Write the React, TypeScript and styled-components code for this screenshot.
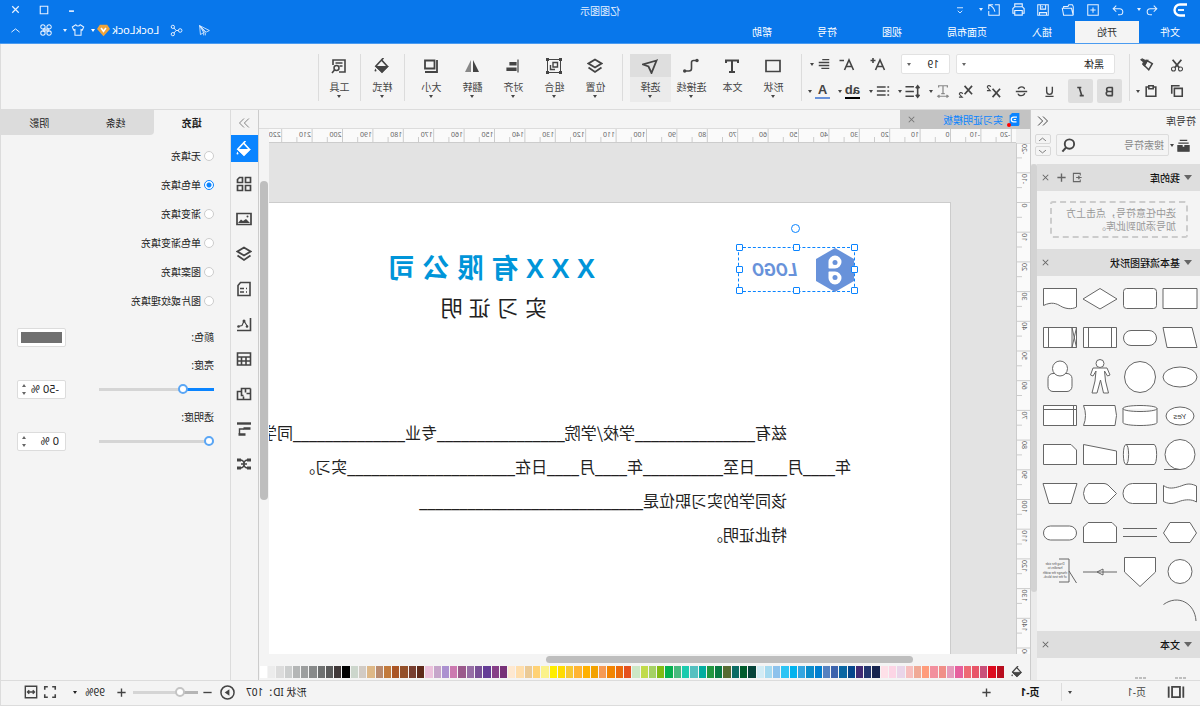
import React, { useState } from "react";
import styled, { createGlobalStyle, css } from "styled-components";

const BLUE = "#0877eb";
const ACCENT = "#0a84ff";
const PANEL = "#f4f4f4";
const LINE = "#dcdcdc";
const INK = "#444";

const GlobalStyle = createGlobalStyle`
  * { box-sizing: border-box; }
  html, body { margin: 0; height: 100%; overflow: hidden; background: ${PANEL}; }
  body { font: 10px/14px "Noto Sans", "Noto Sans CJK SC", sans-serif; color: #222; }
  button, input, select { font: inherit; color: inherit; margin: 0; padding: 0; border: 0; background: none; }
  button { display: inline-flex; align-items: center; justify-content: center; flex: none; white-space: nowrap; }
  svg { display: block; flex: none; }
`;

/* ---------- icons ---------- */

const art: Record<string, React.ReactNode> = {
  logo: <><path d="M1 2.500H8a5.500 5.500 0 0 1 0 11H3" strokeWidth="2.400" /><path d="M4 8h6" strokeWidth="1.800" /></>,
  undo: <path d="M6 3 2.500 6.500 6 10M3 6.500h7a3.500 3.500 0 0 1 0 7H8" />,
  redo: <path d="M10 3l3.500 3.500L10 10M13 6.500H6a3.500 3.500 0 0 0 0 7h2" />,
  newDoc: <path d="M2 2h12v12H2zM8 5v6M5 8h6" />,
  folder: <path d="M2 14V4l1-2h4l1 2h5v2M2 14h11l1.500-8H4L2 14" />,
  save: <path d="M2 2h12v12H2zM5 2v5h6V2M9 3.500v2M4 14v-3h8v3" />,
  print: <path d="M4 5V2h8v3M4 12H2V7l2-2h8l2 2v5h-2M4 9h8v5H4z" />,
  exportBox: <path d="M7 2H2v12h12V9M9 2h5v5M14 2c-3 1-6 3-7 8" />,
  menu: <path d="M4 5h8M5 9l3 3 3-3" />,
  minimize: <path d="M5 10h6" strokeWidth="2" />,
  maximize: <path d="M3 3h10v10H3z" strokeWidth="1.500" />,
  close: <path d="M4 4l8 8M12 4l-8 8" strokeWidth="1.500" />,
  send: <path d="M14 2 2 8l4 2zM14 2l-1 11-4-2.500zM14 2 7 11v3M9 10v4" strokeWidth="1" />,
  share: <><circle cx="3.500" cy="8" r="2.200" /><circle cx="12.500" cy="3.500" r="2" /><circle cx="12.500" cy="12.500" r="2" /><path d="M5.500 8h3l2.500-3M8.500 8l2.500 3" /></>,
  shirt: <path d="M5.500 2 1.500 4.500 3 8l1.500-.5V14h7V7.500L13 8l1.500-3.500-4-2.500c-1 2-4 2-5 0z" />,
  clover: <><circle cx="4.500" cy="4.500" r="2.500" /><circle cx="11.500" cy="4.500" r="2.500" /><circle cx="4.500" cy="11.500" r="2.500" /><circle cx="11.500" cy="11.500" r="2.500" /><path d="M4.500 7h7M4.500 9h7" /></>,
  up: <path d="M3 10l5-4 5 4" />,
  down: <path d="M3 6l5 4 5-4" />,
  diamond: <><path d="M3.500 1h9L16 6l-8 9L0 6z" fill="#f0a43a" stroke="none" /><path d="M5 5l3 4 3-4" stroke="#fff" strokeWidth="2" /></>,
  cut: <><circle cx="4" cy="12.500" r="2.300" /><circle cx="12" cy="12.500" r="2.300" /><path d="M5.500 11 13 2M10.500 11 3 2" strokeWidth="2" /></>,
  brush: <><path d="M2 6.500 8 3l3 5.500-5 5z" strokeWidth="1.800" /><path d="M7 2.500 11 9l2-2-1-2.500 3-2.500-1.500-1-3 1.500z" fill="currentColor" /></>,
  copy: <path d="M2 5h9v9H2zM5 2h9v9" strokeWidth="1.800" />,
  paste: <path d="M5.500 3.500H2.500V14h11V3.500h-3M5.500 2h5v3.500h-5z" strokeWidth="1.800" />,
  bold: <path d="M4.500 3v10M4 3h5a2.500 2.500 0 0 1 0 5H5h4.500a2.500 2.500 0 0 1 0 5H4" strokeWidth="2" />,
  italic: <path d="M7 3h5M4 13h5M9.500 3l-3 10" strokeWidth="2" />,
  underline: <path d="M4.500 2v6a3.500 3.500 0 0 0 7 0V2M3 14h10" strokeWidth="1.700" />,
  strike: <path d="M12 5c-1-3.500-8-3.500-7.500 0M4 10c1 4 8.500 4 8 .5M1 8h14" strokeWidth="1.700" />,
  sup: <><path d="M1 5l8 9M9 5l-8 9" strokeWidth="1.800" /><path d="M11 3c.5-2 4-1.500 3.500.5L11.500 7H15" strokeWidth="1.200" /></>,
  sub: <><path d="M1 2l8 9M9 2l-8 9" strokeWidth="1.800" /><path d="M11 10.500c.5-2 4-1.500 3.500.5L11.500 14H15" strokeWidth="1.200" /></>,
  letters: <path d="M3 4V2h10v2M8 2v9M6 11h4M2 14h12M4 12.500 2 14l2 1.500M12 12.500l2 1.500-2 1.500" strokeWidth="1.400" stroke="#888" />,
  lineGap: <path d="M6.500 3h9M6.500 8h9M6.500 13h9M2.500 2v12M.5 4.500l2-2.500 2 2.500M.5 11.500l2 2.500 2-2.500" strokeWidth="1.700" />,
  list: <path d="M5 3.500h10M5 8h10M5 12.500h10M1 3.500h2M1 8h2M1 12.500h2" strokeWidth="1.700" />,
  bigger: <path d="M1.500 14 6 4l4.500 10M3 10.500h6M10.500 4.500h5M13 2v5" strokeWidth="1.600" />,
  smaller: <path d="M1.500 14 6 4l4.500 10M3 10.500h6M11 4.500h4.500" strokeWidth="1.600" />,
  align: <path d="M2 3h8M2 6.300h12M2 9.600h12M2 13h9" strokeWidth="1.700" />,
  shape: <path d="M1 2.500h14v11H1z" strokeWidth="1.700" />,
  text: <path d="M2 5V2.500h12V5M8 2.500V14M5 14h6" strokeWidth="2" />,
  connector: <><path d="M2 2.500h3.500q2 0 2 2v6q0 2.500 2.500 2.500h4" strokeWidth="1.600" /><circle cx="2" cy="2.500" r="1.700" fill="currentColor" stroke="none" /><circle cx="14.300" cy="13" r="1.700" fill="currentColor" stroke="none" /></>,
  pointer: <path d="M1.500 2.500 15 6.500l-5.500 2L6.500 15z" strokeWidth="1.800" />,
  layers: <path d="M8 1.500 14.500 5.500 8 9.500 1.500 5.500zM1.500 9.500 8 14l6.500-4.500" strokeWidth="1.800" />,
  group: <><path d="M1.500 1.500h13v13h-13z" strokeWidth="1" /><path d="M4.500 4.500h4.500v4.500H4.500zM7 11.500h4.500V7" strokeWidth="1.400" /><path d="M0 0h3v3H0zM13 0h3v3h-3zM0 13h3v3H0zM13 13h3v3h-3z" fill="currentColor" stroke="none" /></>,
  alignLeft: <><path d="M3 1.500v13" strokeWidth="1.200" /><path d="M5 4.500h6v2.500H5zM5 10h9v2.500H5z" fill="currentColor" /></>,
  flip: <><path d="M7 2v12H1z" fill="currentColor" stroke="none" /><path d="M9 2v12h6z" fill="#888" stroke="none" /></>,
  size: <path d="M4.500 2.500h9.500v8H4.500zM2 2v12h12" strokeWidth="1.800" />,
  bucket: <><path d="M8.500 2 14 8 8 14 2.500 8.500zM9 2.500 6.500 0" strokeWidth="1.600" /><path d="M2.500 8.500H14L8 14z" fill="currentColor" /><path d="M14.500 10.500l1 2a1 1 0 1 1-2 0z" fill="currentColor" stroke="none" /></>,
  tools: <><path d="M14 7V2H2v12h6M4.500 5h7M4.500 8h3" strokeWidth="1.600" /><circle cx="10.500" cy="10" r="2.500" strokeWidth="1.500" /><path d="M12.500 12l2.500 3" strokeWidth="1.600" /></>,
  dblLeft: <path d="M8 2 2 8l6 6M14.500 2l-6 6 6 6" />,
  dblRight: <path d="M8 2l6 6-6 6M1.500 2l6 6-6 6" />,
  drawer: <><path d="M2 8h4.500v2h3V8H14v6H2z" fill="currentColor" /><path d="M2.500 5.500h11M4 2.500h8" strokeWidth="1.500" /></>,
  search: <><circle cx="7" cy="6.500" r="5" strokeWidth="2" /><path d="M10.500 10l4 4.500" strokeWidth="2.200" /></>,
  import: <path d="M9 2h5v12H4v-3M4 5V2h5M2 8h8M7 5.500 4.500 8 7 10.500" strokeWidth="1.500" />,
  plus: <path d="M8 2v12M2 8h12" strokeWidth="2" />,
  minus: <path d="M2 8h12" strokeWidth="2" />,
  apps: <path d="M1.500 1.500h5v5h-5zM1.500 9.500h5v5h-5zM9.500 9.500h5v5h-5zM9.500 1.500h3l2 2v3h-5z" strokeWidth="1.700" />,
  image: <><path d="M1 2.500h14v11H1z" strokeWidth="1.700" /><path d="M2 12l4-4 3 2 2-1.500 3 3.500z" fill="currentColor" stroke="none" /><circle cx="4.500" cy="5.500" r="1" fill="currentColor" stroke="none" /></>,
  note: <path d="M2 1.500h9.500L14 4.500v10H2zM5 7.500h1M8 7.500h4M5 11h1M8 11h4" strokeWidth="1.600" />,
  chart: <><path d="M1.500 2v12.500H15" strokeWidth="1.600" /><path d="M4.500 10.500 8 5l2 4.500 4 1" strokeWidth="1.100" /><circle cx="8" cy="5" r="1.500" fill="currentColor" stroke="none" /><circle cx="5" cy="10.500" r="1.300" fill="currentColor" stroke="none" /><circle cx="13.500" cy="10.500" r="1.300" fill="currentColor" stroke="none" /></>,
  table: <path d="M1.500 2h13v12h-13zM1.500 6h13M1.500 10h13M6 6v8M10.500 6v8" strokeWidth="1.600" />,
  plan: <path d="M1.500 2.500h9v3h4v8h-6v-3M8.500 13.500h-7v-11M1.500 7.500h4M6.500 2.500v4M10.500 5.500v4h-2" strokeWidth="1.600" />,
  gantt: <><path d="M1 2.500h14" strokeWidth="2.400" /><path d="M1.500 7.500h7M6.500 13.500h7" strokeWidth="2.400" /><path d="M8 8h4.500v5" strokeWidth="1.400" /></>,
  mind: <><path d="M4 4q4 0 4 4t4 4M4 12q4 0 4-4t4-4M5 8h6" strokeWidth="1.400" /><path d="M1 2.500h4v3H1zM11 2.500h4v3h-4zM1 10.500h4v3H1zM11 10.500h4v3h-4z" fill="currentColor" stroke="none" /></>,
  pages: <path d="M4.500 3.500h7v9h-7zM1.500 3v10M14.500 3v10" strokeWidth="1.600" />,
  play: <><circle cx="8" cy="8" r="7" strokeWidth="1.600" /><path d="M6 4.500 11 8l-5 3.500z" fill="currentColor" stroke="none" /></>,
  full: <path d="M2 5.500V2h3.500M10.500 2H14v3.500M14 10.500V14h-3.500M5.500 14H2v-3.500" strokeWidth="1.800" />,
  fit: <path d="M1.500 1.500h13v13h-13zM4 8h8M6 6 4 8l2 2M10 6l2 2-2 2" strokeWidth="1.600" />,
  doc: <><path d="M2 0h9l3 3v11a2 2 0 0 1-2 2H4a2 2 0 0 1-2-2z" fill={ACCENT} stroke="none" /><path d="M5 5h4a3 3 0 0 1 0 6H5.500M6 8h3" stroke="#fff" strokeWidth="1.500" /></>,
};

const Icon = ({ name, size = 14 }: { name: string; size?: number }) => (
  <svg width={size} height={size} viewBox="0 0 16 16" fill="none" stroke="currentColor" strokeWidth="1.2" aria-hidden="true">
    {art[name]}
  </svg>
);

const Caret = styled.i<{ $up?: boolean; $large?: boolean }>`
  width: 0;
  flex: none;
  border: ${(p) => (p.$large ? "4px" : "2px")} solid transparent;
  border-bottom: ${(p) => (p.$up ? "3px solid currentColor" : "0")};
  border-top: ${(p) => (p.$up ? "0" : `${p.$large ? "5px" : "3px"} solid currentColor`)};
`;

/* ---------- frame ---------- */

/* The whole window is shown as its mirror image. */
const Shell = styled.div`
  height: 100vh;
  display: flex;
  flex-direction: column;
  background: ${PANEL};
  border-right: 1px solid ${LINE};
  transform: scaleX(-1);
`;

const Header = styled.header`
  flex: none;
  background: ${BLUE};
  color: #e6f1ff;
  border-bottom: 1px solid #4a9bf0;
  margin-right: -1px;
`;

const TitleRow = styled.div`
  display: flex;
  height: 21px;
  align-items: center;
`;

const Side = styled.div<{ $end?: boolean }>`
  flex: 1;
  display: flex;
  align-items: center;
  padding: 0 2px;
  margin-top: -2px;
  justify-content: ${(p) => (p.$end ? "flex-end" : "flex-start")};
`;

const BarButton = styled.button<{ $w?: number }>`
  width: ${(p) => p.$w ?? 25}px;
  height: 20px;
`;

const BarSplit = styled.button`
  gap: 4px;
  height: 20px;
  width: 33px;
  padding: 0 2px 0 0;
`;

const LogoMark = styled.span`
  width: 24px;
  margin-left: 10px;
  color: #fff;
`;

const AppTitle = styled.h1`
  margin: 0;
  font-size: 10px;
  font-weight: 400;
`;

const TabRow = styled.div`
  display: flex;
  height: 22px;
`;

const Tabs = styled.nav`
  display: flex;
  gap: 1px;
  flex: 1;
`;

const MenuTab = styled.button<{ $active?: boolean; $pad?: number }>`
  padding: 0 ${(p) => p.$pad ?? 22}px;
  color: ${(p) => (p.$active ? "#333" : "#fff")};
  background: ${(p) => (p.$active ? PANEL : "transparent")};
`;

const Account = styled.div`
  display: flex;
  align-items: center;
  margin-top: -4px;
`;

const UserButton = styled.button`
  gap: 2px;
  padding: 0 3px;
  font-size: 11px;
  color: #fff;
`;

const ThemeButton = styled.button`
  gap: 4px;
  width: 28px;
`;

/* ---------- ribbon ---------- */

const Ribbon = styled.div`
  flex: none;
  display: flex;
  height: 66px;
  padding-top: 10px;
  border-bottom: 1px solid ${LINE};
  color: ${INK};
`;

const RibbonGroup = styled.div<{ $pad?: string }>`
  display: flex;
  height: 47px;
  padding: ${(p) => p.$pad ?? "0"};
  border-right: 1px solid ${LINE};
`;

const ClipGrid = styled.div`
  display: grid;
  grid-template-columns: 26px 34px;
  grid-template-rows: 20px 32px;
  align-items: center;
  padding-top: 1px;
`;

const ClipButton = styled.button`
  gap: 4px;
  height: 20px;
`;

const FontRows = styled.div`
  display: flex;
  flex-direction: column;
  gap: 5px;
`;

const FontRow = styled.div<{ $indent?: boolean }>`
  display: flex;
  align-items: center;
  height: ${(p) => (p.$indent ? "20px" : "24px")};
  padding-left: ${(p) => (p.$indent ? "7px" : "0")};
`;

const Picker = styled.label<{ $w: number }>`
  position: relative;
  width: ${(p) => p.$w}px;
  height: 20px;
  margin-right: 6px;
  border: 1px solid #e2e2e2;
  border-radius: 2px;
  background: #fff;
  color: #222;

  select {
    appearance: none;
    display: block;
    width: 100%;
    height: 18px;
    padding-left: 10px;
  }

  i {
    position: absolute;
    right: 5px;
    top: 8px;
    color: #666;
  }
`;

const IconButton = styled.button<{ $w?: number; $on?: boolean }>`
  width: ${(p) => p.$w ?? 28}px;
  height: 24px;
  border-radius: 2px;
  ${(p) => p.$on && css`background: #dedede; margin-right: 4px;`}
`;

const SplitButton = styled.button`
  width: 30px;
  height: 24px;
  gap: 3px;
  justify-content: flex-start;
  padding-left: 2px;
`;

const Swatched = styled.span<{ $c: string }>`
  width: 15px;
  height: 16px;
  font: 700 13px/13px "Liberation Sans", Arial, sans-serif;
  text-align: center;
  border-bottom: 2px solid ${(p) => p.$c};
`;

const Tool = styled.button<{ $on?: boolean }>`
  flex-direction: column;
  justify-content: flex-start;
  width: 41px;
  height: 48px;
  background: ${(p) => (p.$on ? "linear-gradient(#dedede 23px, #ebebeb 23px)" : "none")};

  svg { margin: 4px 0 6px; }
  i { margin-top: 1px; }
`;

/* ---------- library ---------- */

const Main = styled.main`
  flex: 1;
  min-height: 0;
  display: flex;
`;

const Library = styled.aside`
  width: 170px;
  flex: none;
  display: flex;
  flex-direction: column;
  border-right: 1px solid #ccc;
`;

const LibHead = styled.div`
  display: flex;
  justify-content: space-between;
  align-items: center;
  height: 22px;
  padding: 0 6px 0 4px;
  color: #333;
`;

const LibSearch = styled.div`
  display: flex;
  align-items: center;
  height: 32px;
  padding: 0 4px 6px 8px;
  color: ${INK};
`;

const LibMenu = styled.button`
  width: 23px;
  gap: 2px;
`;

const SearchBox = styled.label`
  flex: 1;
  min-width: 0;
  display: flex;
  align-items: center;
  height: 22px;
  padding: 0 4px;
  margin-right: 5px;
  border: 1px solid ${LINE};
  border-radius: 2px;

  input { flex: 1; width: 0; min-width: 0; outline: 0; }
  input::placeholder { color: #888; opacity: 1; }
`;

const StepPair = styled.div`
  flex: none;
  display: flex;
  flex-direction: column;
  gap: 2px;

  button {
    width: 16px;
    height: 10px;
    border: 1px solid #d8d8d8;
    border-radius: 2px;
    color: #666;
  }
`;

const LibBody = styled.div`
  flex: 1;
  min-height: 0;
  display: flex;
`;

const LibList = styled.div`
  flex: 1;
  overflow: hidden;
`;

const LibTrack = styled.div`
  width: 6px;
  background: #ebebeb;
`;

const LibThumb = styled.div`
  height: 83%;
  border-radius: 3px;
  background: #d3d3d3;
`;

const SectionHead = styled.div`
  display: flex;
  align-items: center;
  height: 27px;
  padding: 0 1px 0 8px;
  background: #dedede;
  color: #666;

  h2 { margin: 0 auto 0 4px; font-size: 10px; font-weight: 500; color: #111; }
  button { width: 16px; height: 16px; }
`;

const DropHint = styled.p`
  margin: 10px 13px 11px 12px;
  padding: 4px 10px;
  height: 37px;
  border: 2px dashed #ccc;
  border-radius: 3px;
  color: #999;
  line-height: 13px;
  white-space: nowrap;
`;

const ShapeGrid = styled.div`
  display: grid;
  grid-template-columns: repeat(4, 40px);
  grid-auto-rows: 39px;
  padding: 3px 0 1px;
`;

const TinyText = styled.text`
  font: 3px "Noto Sans", sans-serif;
  fill: #444;
  stroke: none;
  text-anchor: middle;
`;

const YesText = styled.text`
  font: italic 8px "Liberation Sans", Arial, sans-serif;
  fill: #444;
  stroke: none;
`;

const shapes: [string, React.ReactNode][] = [
  ["流程", <path d="M3 9.500h34v20H3z" />],
  ["圆角矩形", <rect x="3.500" y="9.500" width="33" height="20" rx="3" />],
  ["判定", <path d="M20 9.500 37 20 20 30 3 20z" />],
  ["文档", <path d="M3.500 9.500h33v17c-8-4-13-2-17 0.500s-11 4-16 1z" />],
  ["数据", <path d="M8 9.500h29l-4 20H3z" />],
  ["终止", <rect x="3.500" y="12.500" width="33" height="15" rx="7.500" />],
  ["子流程", <path d="M3.500 9.500h33v20h-33zM8.500 9.500v20M31.500 9.500v20" />],
  ["批处理", <path d="M3.500 9.500h33v20h-33zM8 9.500v20M31.500 9.500v20M3.500 9.500l4.500 20M8 9.500l-4.500 20" />],
  ["椭圆", <ellipse cx="20" cy="20" rx="17" ry="10" />],
  ["圆形", <circle cx="20" cy="20" r="15.500" />],
  ["人", <><path d="M13 11h14l2.500 7-2.500 1-3-5 1 10 3 12h-5l-3.500-13L16.500 36h-5l3-12 1-10-3 5-2.500-1z" /><circle cx="20" cy="6.500" r="4" /></>],
  ["用户", <><rect x="8" y="16.500" width="24" height="18" rx="5" /><circle cx="20" cy="11.500" r="7.500" /></>],
  ["是", <><ellipse cx="20" cy="20" rx="14" ry="9" /><YesText x="20" y="23" textAnchor="middle">Yes</YesText></>],
  ["数据库", <path d="M3 12.500v14c0 4 34 4 34 0v-14c0 4-34 4-34 0s34-4 34 0" />],
  ["存储数据", <path d="M5 9.500h31.500q-4 10 0 20H5q-3-10 0-20z" />],
  ["内部存储", <path d="M3.500 9.500h33v20h-33zM3.500 13.500h33M6.500 9.500v20" />],
  ["顺序数据", <><circle cx="20" cy="19.500" r="15" /><path d="M20 34.500h16" /></>],
  ["直接数据", <path d="M6 9.500h28c3.500 0 3.500 20 0 20H6c-3.500 0-3.500-20 0-20zM34 9.500c-3.500 0-3.500 20 0 20" />],
  ["手动输入", <path d="M3.500 16 36.500 9.500v20h-33z" />],
  ["卡片", <path d="M9 9.500h27.500v20h-33V15z" />],
  ["纸带", <path d="M3.500 12c8-4 12-1 17 0.500s11 3 16-1v16c-8 4-12 1-17-.5s-11-2-16 1z" />],
  ["延迟", <path d="M3.500 9.500h24a9.500 10 0 0 1 0 20h-24z" />],
  ["显示", <path d="M3.500 19.500 12 11q2-1.500 4-1.500h15.500q5 4 5 10t-5 10H16q-2 0-4-1.500z" />],
  ["手动操作", <path d="M3 9.500h34l-6 20H9z" />],
  ["准备", <path d="M3.500 20 10 9.500h20L36.500 20 30 29.500H10z" />],
  ["并行", <path d="M3 15.500h34M3 23.500h34" />],
  ["循环界限", <path d="M8 9.500h24l4.500 4.500v15.500h-33V14z" />],
  ["终止符", <rect x="3.500" y="13" width="33" height="14" rx="7" />],
  ["连接点", <circle cx="20" cy="19.500" r="12" />],
  ["跨页引用", <path d="M4.500 5.500h31V20L20 34.500 4.500 20z" />],
  ["箭头", <path d="M3 20h34M17 17l6 3-6 3z" />],
  ["注释", <><path d="M21 7h-10v23h10M11 19 3.500 31" fill="none" /><TinyText x="25" y="13">Drag the side</TinyText><TinyText x="25" y="17">handles to</TinyText><TinyText x="25" y="22">change the width</TinyText><TinyText x="25" y="26">of the text block.</TinyText></>],
  ["弧线", <path d="M36.500 13.500C22 3 5 12 4 30" fill="none" />],
];

/* ---------- workspace ---------- */

const Workspace = styled.section`
  flex: 1;
  min-width: 0;
  display: grid;
  grid-template-columns: 14px 1fr 10px;
  grid-template-rows: 19px 14px 1fr 11px 15px;
  border-right: 1px solid #ccc;
`;

const DocTabs = styled.div`
  grid-column: 1 / -1;
  display: flex;
  border-bottom: 1px solid ${LINE};
`;

const DocTab = styled.div`
  display: flex;
  align-items: center;
  width: 130px;
  height: 19px;
  padding: 0 6px 0 9px;
  background: #c3c3c3;
  color: ${ACCENT};

  a { color: inherit; text-decoration: none; margin: 0 auto 0 5px; }
  button { color: #777; width: 12px; }
`;

const DocIcon = styled.span`
  position: relative;

  &::after {
    content: "";
    position: absolute;
    right: -1px;
    bottom: -1px;
    width: 4px;
    height: 4px;
    border-radius: 50%;
    background: #f00;
  }
`;

const Corner = styled.div`
  background: #efefef;
`;

const RulerBox = styled.div`
  overflow: hidden;
  background: #fafafa;
  min-height: 0;

  line { stroke: #ccc; }
  text { font: 7px "Noto Sans", sans-serif; fill: #666; }
`;

const VScroll = styled.div`
  grid-row: 2 / 5;
  grid-column: 3;
  padding: 52px 1px 0 1px;
`;

const VThumb = styled.div`
  height: 66%;
  border-radius: 4px;
  background: #bebebe;
`;

const HScroll = styled.div`
  grid-column: 1 / 3;
  padding: 2px 0 1px 117px;
`;

const HThumb = styled.div`
  width: 57%;
  height: 7px;
  border-radius: 4px;
  background: #bebebe;
`;

const Canvas = styled.div`
  position: relative;
  overflow: hidden;
  background: #e3e3e3;
`;

const Page = styled.article`
  position: absolute;
  left: 65px;
  top: 59px;
  right: -80px;
  bottom: -80px;
  border: 1px solid #ccc;
  background: #fff;
  color: #222;
  white-space: nowrap;
`;

const Company = styled.h2`
  position: absolute;
  left: 355px;
  top: 47px;
  margin: 0;
  font: 700 27px/38px "Liberation Sans", "Noto Sans CJK SC", sans-serif;
  color: #0095d9;
`;

const DocTitle = styled.h3`
  position: absolute;
  left: 403px;
  top: 91px;
  margin: 0;
  font: 400 22px/30px "Liberation Sans", "Noto Sans CJK SC", sans-serif;
`;

const Letter = styled.div`
  position: absolute;
  left: 99px;
  top: 212px;
  font: 16px/34px "Noto Sans CJK SC", sans-serif;

  p { margin: 0; height: 34px; }
`;

const Indented = styled.p`
  padding-left: 64px;
`;

const Blank = styled.span`
  font: 18px/20px "Noto Sans", sans-serif;
`;

const Selection = styled.div`
  position: absolute;
  left: 95px;
  top: 44px;
  display: flex;
  align-items: center;
  gap: 17px;
  width: 117px;
  height: 45px;
  border: 1px dashed ${ACCENT};

  b {
    font: italic 700 18px/24px Roboto, sans-serif;
    color: #6892da;
  }
`;

const Handle = styled.i<{ $x: string; $y: string; $round?: boolean }>`
  position: absolute;
  left: ${(p) => p.$x};
  top: ${(p) => p.$y};
  width: ${(p) => (p.$round ? 9 : 7)}px;
  height: ${(p) => (p.$round ? 9 : 7)}px;
  margin: -4px 0 0 -4px;
  border: 1px solid ${ACCENT};
  border-radius: ${(p) => (p.$round ? "50%" : "1px")};
  background: #fff;
`;

const Palette = styled.div`
  grid-column: 1 / -1;
  display: flex;
  align-items: center;
  height: 14px;
  padding-left: 5px;
  color: ${INK};
`;

const PaletteMenu = styled.button`
  width: 21px;
  justify-content: flex-start;
  padding-left: 2px;
`;

const Chip = styled.button<{ $c: string }>`
  flex: 1 1 0;
  min-width: 0;
  height: 12px;
  background: ${(p) => p.$c};
  border-right: 1px solid ${PANEL};
`;

const palette =
  "b80d1e dd0a1e c9507a e85568 ee6a74 e6609e e59bbb f08f88 f2909e ff9c7c f0aa96 f7bfbe ead5e9 fcd5e5 fee0e8 16244f 23366f 412b74 06468c 0a66a3 3d63ac 5581c0 007fd0 0b8ccb 34a5e0 02b3ee 2cc4f4 8dc2ec a5daf0 d2ecf5 05443a 005c2c 0a6b64 566b32 087a43 229640 03ada0 54c0c0 1bcbae 48ba7e 06b050 82bb14 a5d164 c1db4a cce7c6 e5511e ea6a0c f28400 f59a55 f3a200 ffb000 ffb432 f7c832 ffdb00 ffee00 fbf28a ffd275 ebca95 ffdeac fee8d0 783278 873f87 643c96 785096 966ea5 9b5a8c cc7ab0 ab91d0 c6a5ca ecc2dc 5f2a1a 783f30 94502a aa5525 c27a3c b98a6e deb887 d2cbc4 ccd6cc 000000 403838 5a5a5a 6e7070 888a8a 9c9e9e b4b6b6 cccece dcdcdc ececec ffffff".split(" ");

const range = (from: number, to: number) => Array.from({ length: to - from + 1 }, (_, i) => from + i);

/* Last labelled tick that fits beside the side panels and above the bottom bars. */
const lastColumn = () => Math.floor((window.innerWidth - 519) / 30.4);
const lastRow = () => Math.floor((window.innerHeight - 253) / 29.7);

const HRuler = () => (
  <RulerBox>
    <svg width="100%" height="14">
      {range(-2, lastColumn()).map((n) => {
        const x = 65.5 + n * 30.4;
        return (
          <g key={n}>
            <line x1={x} x2={x} y1="0" y2="14" />
            <line x1={x + 15.2} x2={x + 15.2} y1="8" y2="14" />
            <text x={x + 1} y="8">{n * 10}</text>
          </g>
        );
      })}
      <line x1="0" x2="100%" y1="13.5" y2="13.5" />
    </svg>
  </RulerBox>
);

const VRuler = () => (
  <RulerBox>
    <svg width="14" height="100%">
      {range(-2, lastRow()).map((n) => {
        const y = 59.5 + n * 29.7;
        return (
          <g key={n}>
            <line x1="0" x2="14" y1={y} y2={y} />
            <line x1="8" x2="14" y1={y + 14.8} y2={y + 14.8} />
            <text transform={`translate(8 ${y + 1}) rotate(-90)`} textAnchor="end">{n * 10}</text>
          </g>
        );
      })}
      <line x1="13.5" x2="13.5" y1="0" y2="100%" />
    </svg>
  </RulerBox>
);

/* ---------- properties ---------- */

const Rail = styled.nav`
  width: 28px;
  flex: none;
  display: flex;
  flex-direction: column;
  gap: 8px;
  border-right: 1px solid ${LINE};
  color: ${INK};
`;

const RailToggle = styled.button`
  height: 25px;
  margin-bottom: -8px;
  color: #777;
`;

const RailButton = styled.button<{ $on?: boolean }>`
  height: 27px;
  background: ${(p) => (p.$on ? ACCENT : "none")};
  color: ${(p) => (p.$on ? "#fff" : "inherit")};
`;

const Props = styled.aside`
  width: 229px;
  flex: none;
`;

const PropTabs = styled.div`
  display: flex;
  height: 25px;
`;

const PropTab = styled.button<{ $on?: boolean; $first?: boolean }>`
  flex: 1;
  font-weight: ${(p) => (p.$on ? 700 : 400)};
  background: ${(p) => (p.$on ? PANEL : "#dcdcdc")};
  border-bottom-left-radius: ${(p) => (p.$first ? "4px" : "0")};
`;

const PropBody = styled.div`
  display: flex;
  flex-direction: column;
  padding: 6px 16px 0;
`;

const RadioRow = styled.label`
  display: flex;
  align-items: center;
  gap: 3px;
  height: 29px;

  input {
    appearance: none;
    width: 10px;
    height: 10px;
    border: 1px solid #ccc;
    border-radius: 50%;
    background: #fff;
  }
  input:checked {
    border-color: ${ACCENT};
    background: radial-gradient(${ACCENT} 2px, #fff 3px);
  }
`;

const Field = styled.div<{ $gap: number }>`
  display: flex;
  align-items: center;
  justify-content: space-between;
  height: 20px;
  margin-top: ${(p) => p.$gap}px;
`;

const ColorInput = styled.input`
  width: 49px;
  height: 19px;
  padding: 3px;
  border: 1px solid ${LINE};
  border-radius: 2px;
  background: #fff;

  &::-webkit-color-swatch-wrapper { padding: 0; }
  &::-webkit-color-swatch { border: 0; }
`;

const Slider = styled.input.attrs({ type: "range" })<{ $w: number; $fill: string; $ring: string }>`
  appearance: none;
  width: ${(p) => p.$w}px;
  height: 10px;
  background: linear-gradient(
      to right,
      ${(p) => p.$fill} ${(p) => Number(p.value)}%,
      #d5d5d5 ${(p) => Number(p.value)}%
    )
    center / 100% 3px no-repeat;

  &::-webkit-slider-thumb {
    appearance: none;
    width: 10px;
    height: 10px;
    border: 2px solid ${(p) => p.$ring};
    border-radius: 50%;
    background: #fff;
  }
`;

const Spin = styled.div`
  display: flex;
  width: 49px;
  height: 19px;
  border: 1px solid ${LINE};
  border-radius: 2px;
  background: #fff;
  color: #666;

  input { flex: 1; min-width: 0; padding-left: 6px; font-size: 11px; color: #222; }
`;

const SpinArrows = styled.div`
  display: flex;
  flex-direction: column;
  justify-content: center;
  gap: 2px;
  width: 12px;

  button { height: 6px; }
`;

const Percent = ({ value, label }: { value: string; label: string }) => (
  <Spin>
    <input aria-label={label} defaultValue={value} />
    <SpinArrows>
      <button aria-label="增加"><Caret $up /></button>
      <button aria-label="减少"><Caret /></button>
    </SpinArrows>
  </Spin>
);

/* ---------- status bar ---------- */

const Status = styled.footer`
  flex: none;
  display: flex;
  align-items: center;
  height: 26px;
  padding-bottom: 2px;
  border-top: 1px solid ${LINE};
  border-bottom: 1px solid ${LINE};
  color: ${INK};
`;

const PagePicker = styled.label`
  position: relative;
  width: 92px;
  margin-left: 14px;
  border-right: 1px solid ${LINE};

  select {
    appearance: none;
    display: block;
    width: 100%;
    height: 18px;
    padding-left: 7px;
  }

  i { position: absolute; right: 6px; top: 8px; }
`;

const PageTab = styled.button`
  width: 62px;
  color: #111;
  font-weight: 700;
`;

const StatusButton = styled.button<{ $w: number }>`
  width: ${(p) => p.$w}px;
  height: 20px;
`;

const StatusText = styled.span`
  margin-left: auto;
  margin-right: 8px;
  color: #222;
`;

const ZoomButton = styled.button`
  gap: 8px;
  width: 52px;
  padding-left: 6px;
  justify-content: flex-start;
  color: #222;
`;

const ViewButtons = styled.div`
  display: flex;
  margin-right: 20px;
`;

const PagesMark = styled.button`
  width: 18px;
  margin-left: 15px;
`;

const fills = ["无填充", "单色填充", "渐变填充", "单色渐变填充", "图案填充", "图片或纹理填充"];
const railItems = ["apps", "image", "layers", "note", "chart", "table", "plan", "gantt", "mind"];
const railNames = ["符号", "图片", "图层", "注释", "图表", "表格", "平面图", "甘特图", "导图"];

const Section = ({ title, extra }: { title: string; extra?: boolean }) => (
  <SectionHead>
    <Caret $large />
    <h2>{title}</h2>
    {extra && <button aria-label="导入"><Icon name="import" size={11} /></button>}
    {extra && <button aria-label="添加"><Icon name="plus" size={11} /></button>}
    <button aria-label="关闭"><Icon name="close" size={11} /></button>
  </SectionHead>
);

const ToolItem = ({ icon, label, on, plain }: { icon: string; label: string; on?: boolean; plain?: boolean }) => (
  <Tool $on={on}>
    <Icon name={icon} size={16} />
    {label}
    {!plain && <Caret />}
  </Tool>
);

const blank = (n: number) => <Blank>{"_".repeat(n)}</Blank>;

export default function App() {
  const [fill, setFill] = useState(1);
  const [light, setLight] = useState(25);
  const [alpha, setAlpha] = useState(0);
  const [zoom, setZoom] = useState(24);

  return (
    <>
      <GlobalStyle />
      <Shell>
        <Header>
          <TitleRow>
            <Side>
              <LogoMark><Icon name="logo" size={16} /></LogoMark>
              <BarSplit aria-label="撤销"><Icon name="undo" size={14} /><Caret /></BarSplit>
              <BarButton aria-label="恢复"><Icon name="redo" size={14} /></BarButton>
              <BarButton aria-label="新建"><Icon name="newDoc" size={14} /></BarButton>
              <BarButton aria-label="打开"><Icon name="folder" size={14} /></BarButton>
              <BarButton aria-label="保存"><Icon name="save" size={14} /></BarButton>
              <BarButton aria-label="打印"><Icon name="print" size={15} /></BarButton>
              <BarSplit aria-label="导出"><Icon name="exportBox" size={14} /><Caret /></BarSplit>
              <BarButton aria-label="更多"><Icon name="menu" size={12} /></BarButton>
            </Side>
            <AppTitle>亿图图示</AppTitle>
            <Side $end>
              <BarButton $w={28} aria-label="最小化"><Icon name="minimize" size={13} /></BarButton>
              <BarButton $w={28} aria-label="最大化"><Icon name="maximize" size={12} /></BarButton>
              <BarButton $w={28} aria-label="关闭窗口"><Icon name="close" size={13} /></BarButton>
            </Side>
          </TitleRow>
          <TabRow>
            <Tabs>
              <MenuTab $pad={20}>文件</MenuTab>
              <MenuTab $active>开始</MenuTab>
              <MenuTab>插入</MenuTab>
              <MenuTab>页面布局</MenuTab>
              <MenuTab>视图</MenuTab>
              <MenuTab>符号</MenuTab>
              <MenuTab>帮助</MenuTab>
            </Tabs>
            <Account>
              <BarButton $w={28} aria-label="发送"><Icon name="send" size={13} /></BarButton>
              <BarButton $w={28} aria-label="分享"><Icon name="share" size={13} /></BarButton>
              <UserButton>LockLock<Icon name="diamond" size={13} /><Caret /></UserButton>
              <ThemeButton aria-label="主题"><Icon name="shirt" size={14} /><Caret /></ThemeButton>
              <BarButton $w={28} aria-label="应用"><Icon name="clover" size={14} /></BarButton>
              <BarButton $w={32} aria-label="收起"><Icon name="up" size={13} /></BarButton>
            </Account>
          </TabRow>
        </Header>

        <Ribbon>
          <RibbonGroup $pad="0 0 0 10px">
            <ClipGrid>
              <ClipButton aria-label="剪切"><Icon name="cut" /></ClipButton>
              <ClipButton aria-label="格式刷"><Icon name="brush" /></ClipButton>
              <ClipButton aria-label="复制"><Icon name="copy" /></ClipButton>
              <ClipButton aria-label="粘贴"><Icon name="paste" /><Caret /></ClipButton>
            </ClipGrid>
          </RibbonGroup>
          <RibbonGroup $pad="0 0 0 7px">
            <FontRows>
              <FontRow $indent>
                <Picker $w={159}><select aria-label="字体"><option>黑体</option></select><Caret /></Picker>
                <Picker $w={49}><select aria-label="字号"><option>19</option></select><Caret /></Picker>
                <IconButton $w={34} aria-label="增大字号"><Icon name="bigger" size={16} /></IconButton>
                <IconButton aria-label="减小字号"><Icon name="smaller" size={16} /></IconButton>
                <SplitButton aria-label="对齐方式"><Icon name="align" /><Caret /></SplitButton>
              </FontRow>
              <FontRow>
                <IconButton $w={25} $on aria-label="加粗"><Icon name="bold" size={13} /></IconButton>
                <IconButton $w={25} $on aria-label="斜体"><Icon name="italic" size={13} /></IconButton>
                <IconButton aria-label="下划线"><Icon name="underline" size={13} /></IconButton>
                <IconButton aria-label="删除线"><Icon name="strike" size={13} /></IconButton>
                <IconButton aria-label="上标"><Icon name="sup" size={15} /></IconButton>
                <IconButton aria-label="下标"><Icon name="sub" size={15} /></IconButton>
                <SplitButton aria-label="字符间距"><Icon name="letters" /><Caret /></SplitButton>
                <SplitButton aria-label="行距"><Icon name="lineGap" size={15} /><Caret /></SplitButton>
                <SplitButton aria-label="项目符号"><Icon name="list" /><Caret /></SplitButton>
                <SplitButton><Swatched $c="#000">ab</Swatched><Caret /></SplitButton>
                <SplitButton><Swatched $c="#6892da">A</Swatched><Caret /></SplitButton>
              </FontRow>
            </FontRows>
          </RibbonGroup>
          <RibbonGroup $pad="0 7px">
            <ToolItem icon="shape" label="形状" />
            <ToolItem icon="text" label="文本" plain />
            <ToolItem icon="connector" label="连接线" />
            <ToolItem icon="pointer" label="选择" on />
          </RibbonGroup>
          <RibbonGroup $pad="0 6px">
            <ToolItem icon="layers" label="位置" />
            <ToolItem icon="group" label="组合" />
            <ToolItem icon="alignLeft" label="对齐" />
            <ToolItem icon="flip" label="翻转" />
            <ToolItem icon="size" label="大小" />
          </RibbonGroup>
          <RibbonGroup $pad="0 1px"><ToolItem icon="bucket" label="样式" /></RibbonGroup>
          <RibbonGroup><ToolItem icon="tools" label="工具" /></RibbonGroup>
        </Ribbon>

        <Main>
          <Library>
            <LibHead>
              符号库
              <button aria-label="收起符号库"><Icon name="dblLeft" size={12} /></button>
            </LibHead>
            <LibSearch>
              <LibMenu aria-label="符号库菜单"><Icon name="drawer" size={15} /><Caret /></LibMenu>
              <SearchBox>
                <input placeholder="搜索符号" aria-label="搜索符号" />
                <Icon name="search" size={15} />
              </SearchBox>
              <StepPair>
                <button aria-label="上一个"><Icon name="up" size={11} /></button>
                <button aria-label="下一个"><Icon name="down" size={11} /></button>
              </StepPair>
            </LibSearch>
            <LibBody>
              <LibList>
                <Section title="我的库" extra />
                <DropHint>选中任意符号，点击上方<br />加号添加到此库。</DropHint>
                <Section title="基本流程图形状" />
                <ShapeGrid>
                  {shapes.map(([name, body]) => (
                    <svg key={name} width="40" height="39" viewBox="0 0 40 39" fill="#fff" stroke="#666" strokeWidth="1" role="img" aria-label={name}>
                      {body}
                    </svg>
                  ))}
                </ShapeGrid>
                <Section title="文本" />
                <ShapeGrid>
                  {[0, 1].map((k) => (
                    <svg key={k} width="40" height="39" viewBox="0 0 40 39" stroke="#888" strokeDasharray="3 1">
                      <path d="M14 17h12" />
                    </svg>
                  ))}
                </ShapeGrid>
              </LibList>
              <LibTrack><LibThumb /></LibTrack>
            </LibBody>
          </Library>

          <Workspace>
            <DocTabs>
              <DocTab>
                <DocIcon><Icon name="doc" size={13} /></DocIcon>
                <a href="#doc">实习证明模板</a>
                <button aria-label="关闭文档"><Icon name="close" size={11} /></button>
              </DocTab>
            </DocTabs>
            <Corner />
            <HRuler />
            <VScroll><VThumb /></VScroll>
            <VRuler />
            <Canvas>
              <Page>
                <Selection>
                  <svg width="40" height="44" viewBox="0 0 40 44">
                    <path d="M19 0 38 11v22L19 44 0 33V11z" fill="#6892da" />
                    <path d="M25 20.500H19a6.500 6.500 0 1 1 6.500-6.500v6zM25 23.500H19a6.500 6.500 0 1 0 6.500 6.500v-6z" fill="#fff" />
                    <circle cx="19" cy="14.500" r="2.500" fill="#6892da" />
                    <circle cx="19" cy="29.500" r="2.500" fill="#6892da" />
                  </svg>
                  <b>LOGO</b>
                  {["0%", "50%", "100%"].flatMap((x) =>
                    ["0%", "50%", "100%"].map((y) =>
                      x === "50%" && y === "50%" ? null : <Handle key={x + y} $x={x} $y={y} />
                    )
                  )}
                  <Handle $x="50%" $y="-20px" $round />
                </Selection>
                <Company>X X X 有 限 公 司</Company>
                <DocTitle>实 习 证 明</DocTitle>
                <Letter>
                  <Indented>兹有{blank(15)}学校/学院{blank(16)}专业{blank(14)}同学</Indented>
                  <p>年{blank(4)}月{blank(4)}日至{blank(10)}年{blank(4)}月{blank(4)}日在{blank(21)}实习。</p>
                  <Indented>该同学的实习职位是{blank(28)}</Indented>
                  <Indented>特此证明。</Indented>
                </Letter>
              </Page>
            </Canvas>
            <HScroll><HThumb /></HScroll>
            <Palette>
              <PaletteMenu aria-label="填充颜色"><Icon name="bucket" size={12} /></PaletteMenu>
              {palette.map((c) => <Chip key={c} $c={"#" + c} aria-label={"#" + c} />)}
            </Palette>
          </Workspace>

          <Rail>
            <RailToggle aria-label="收起面板"><Icon name="dblRight" size={12} /></RailToggle>
            <RailButton $on aria-label="填充"><Icon name="bucket" size={16} /></RailButton>
            {railItems.map((n, i) => (
              <RailButton key={n} aria-label={railNames[i]}><Icon name={n} size={16} /></RailButton>
            ))}
          </Rail>

          <Props>
            <PropTabs>
              <PropTab $on>填充</PropTab>
              <PropTab $first>线条</PropTab>
              <PropTab>阴影</PropTab>
            </PropTabs>
            <PropBody>
              {fills.map((f, i) => (
                <RadioRow key={f}>
                  <input type="radio" name="fill" checked={fill === i} onChange={() => setFill(i)} />
                  {f}
                </RadioRow>
              ))}
              <Field $gap={12}>
                <label htmlFor="color">颜色:</label>
                <ColorInput id="color" type="color" defaultValue="#707070" />
              </Field>
              <Field $gap={8}><label htmlFor="light">亮度:</label></Field>
              <Field $gap={4}>
                <Slider id="light" $w={115} $fill={ACCENT} $ring="#5aa6f5" value={light} onChange={(e) => setLight(+e.target.value)} />
                <Percent value="-50 %" label="亮度" />
              </Field>
              <Field $gap={8}><label htmlFor="alpha">透明度:</label></Field>
              <Field $gap={4}>
                <Slider id="alpha" $w={115} $fill={ACCENT} $ring="#5aa6f5" value={alpha} onChange={(e) => setAlpha(+e.target.value)} />
                <Percent value="0 %" label="透明度" />
              </Field>
            </PropBody>
          </Props>
        </Main>

        <Status>
          <PagesMark aria-label="页面列表"><Icon name="pages" size={18} /></PagesMark>
          <PagePicker><select aria-label="页面"><option>页-1</option></select><Caret /></PagePicker>
          <PageTab>页-1</PageTab>
          <StatusButton $w={24} aria-label="添加页"><Icon name="plus" size={11} /></StatusButton>
          <StatusText>形状 ID：107</StatusText>
          <StatusButton $w={20} aria-label="演示"><Icon name="play" size={15} /></StatusButton>
          <StatusButton $w={20} aria-label="缩小"><Icon name="minus" size={11} /></StatusButton>
          <Slider aria-label="缩放" $w={65} $fill="#b5b5b5" $ring="#c4c4c4" value={zoom} onChange={(e) => setZoom(+e.target.value)} />
          <StatusButton $w={22} aria-label="放大"><Icon name="plus" size={11} /></StatusButton>
          <ZoomButton>99%<Caret /></ZoomButton>
          <ViewButtons>
            <StatusButton $w={18} aria-label="全屏"><Icon name="full" /></StatusButton>
            <StatusButton $w={20} aria-label="适应宽度"><Icon name="fit" /></StatusButton>
          </ViewButtons>
        </Status>
      </Shell>
    </>
  );
}
